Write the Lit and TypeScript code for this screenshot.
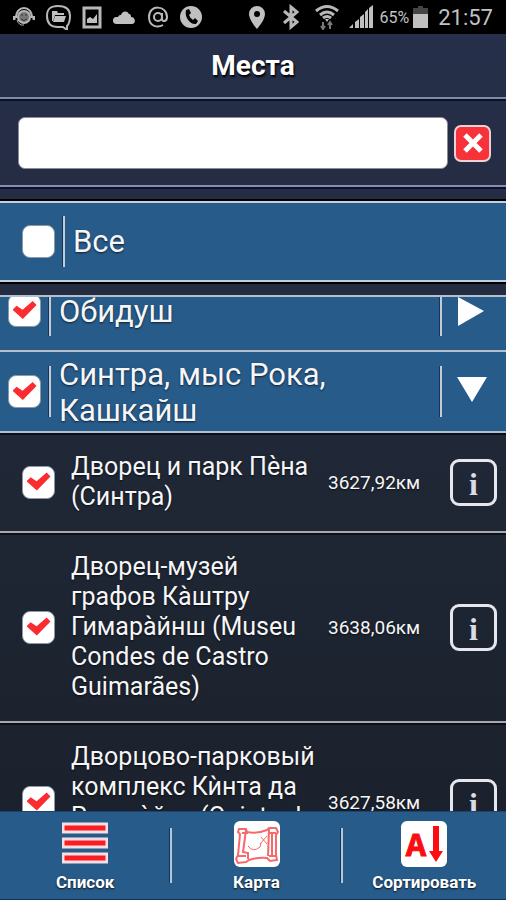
import { LitElement, html, css, svg } from "lit";
import { customElement, property, state } from "lit/decorators.js";

const checkStyles = css`
  input[type="checkbox"] {
    appearance: none;
    flex: none;
    width: 33px;
    height: 33px;
    margin: 0;
    border: 1px solid #8d99a8;
    border-radius: 8px;
    background: #fff;
    display: grid;
    place-items: center;
  }
  input[type="checkbox"]:checked::before {
    content: "";
    width: 24px;
    height: 20px;
    background: #fb2c30;
    clip-path: polygon(0 46%, 17% 26%, 42% 46%, 84% 2%, 100% 22%, 43% 92%);
  }
`;

@customElement("status-bar")
export class StatusBar extends LitElement {
  static styles = css`
    :host {
      display: flex;
      justify-content: space-between;
      align-items: center;
      height: 34px;
      padding: 0 13px;
      background: #000;
      color: #c2c2c2;
    }
    div {
      display: flex;
      align-items: center;
    }
    svg {
      display: block;
      height: 26px;
      fill: none;
      stroke: #b8b8b8;
      stroke-width: 2;
    }
    .solid {
      fill: #c0c0c0;
      stroke: none;
    }
    .left {
      gap: 11px;
    }
    .right {
      gap: 10px;
    }
    .radios {
      gap: 16px;
    }
    .power {
      gap: 4px;
    }
    .signal {
      margin-right: 3px;
    }
    .pct {
      font-size: 16px;
    }
    .clock {
      font-size: 22px;
    }
  `;
  render() {
    return html`
      <div class="left">
        <svg width="22" viewBox="0 0 22 26">
          <path d="M3 14C3 7 7 4 11 4s8 3 8 10" />
          <path d="M1 12v4M21 12v4" stroke-width="3" />
          <circle cx="11" cy="13" r="6" fill="#777" />
          <path d="M8 11h2M12 11h2M8 15q3 3 6 0" stroke="#333" stroke-width="1" />
          <path d="M4 16q2 6 7 5" stroke-width="1" />
        </svg>
        <svg width="25" viewBox="0 0 25 26">
          <path d="M12 2C4 2 1 5 1 12s3 11 11 11h5l4 3v-4c2-2 3-5 3-10C24 5 20 2 12 2Z" />
          <path class="solid" d="M6 7h5l1 2h6v2H9l-2 6H6ZM9 12h11l-2 6H7Z" />
        </svg>
        <svg width="20" viewBox="0 0 20 26">
          <path d="M2 4h16v19H2Z" stroke-width="3" />
          <path class="solid" d="M5 19v-4l3-2 3 2 4-5v9Z" />
        </svg>
        <svg width="23" viewBox="0 0 23 26">
          <path class="solid" d="M3 20a3 3 0 0 1 1-7h1c1-2 2-2 3-2 1-4 6-5 8-1 2 0 2 2 2 3 5 0 5 7 1 7Z" />
        </svg>
        <svg width="22" viewBox="0 0 22 26">
          <circle cx="11" cy="13" r="4" />
          <path d="M15 9v6c0 3 5 3 5-2 0-12-18-13-18 0 0 10 9 11 14 8" />
        </svg>
        <svg width="22" viewBox="0 0 22 26">
          <circle class="solid" cx="11" cy="13" r="11" />
          <path fill="#000" stroke="none" d="M6 6l3-1 2 4-2 2q1 3 4 5l2-2 3 3-2 3C11 21 4 14 6 6Z" />
        </svg>
      </div>
      <div class="right">
        <div class="radios">
          <svg width="20" viewBox="0 0 20 26">
            <path class="solid" fill-rule="evenodd" d="M10 2a8 8 0 0 0-8 8c0 6 8 15 8 15s8-9 8-15a8 8 0 0 0-8-8Zm0 5a3 3 0 1 1 0 6 3 3 0 0 1 0-6Z" />
          </svg>
          <svg width="16" viewBox="0 0 16 26">
            <path d="M1 7l13 11-6 5V3l6 5L1 19" stroke-width="3" />
          </svg>
          <svg width="24" viewBox="0 0 24 26">
            <path d="M1 7q11-9 22 0M5 11q7-6 14 0M8 14q4-3 8 0" stroke-width="3" />
            <path class="solid" d="M10 15h4l-2 3Z" />
            <path d="M8 18v7M6 22l2 3 2-3M15 25v-7M13 21l2-3 2 3" stroke="#777" />
          </svg>
        </div>
        <div class="power">
          <svg class="signal" width="24" viewBox="0 0 24 26">
            <path class="solid" d="M0 24l4-4v4ZM6 18l4-3v9H6ZM11 13l4-3v14h-4Z" />
            <path class="solid" d="M16 8l3-3v19h-3ZM20 4l4-3v23h-4Z" />
          </svg>
          <span class="pct">65%</span>
          <svg width="15" viewBox="0 0 15 26">
            <path fill="#454545" stroke="none" d="M5 2h5v2h5v6H0V4h5Z" />
            <path class="solid" d="M0 10h15v14H0Z" />
          </svg>
        </div>
        <span class="clock">21:57</span>
      </div>
    `;
  }
}

@customElement("group-row")
export class GroupRow extends LitElement {
  @property() name = "";
  @property({ type: Boolean }) open = false;
  static styles = [
    checkStyles,
    css`
      :host {
        display: flex;
        align-items: center;
        min-height: 79px;
        padding: 0 8px;
        background: #275b8a;
        border-bottom: 2px solid #b4bfcc;
      }
      label {
        flex: 1;
        display: flex;
        align-items: center;
        gap: 8px;
      }
      .text {
        flex: 1;
        min-height: 51px;
        padding-top: 2px;
        display: flex;
        align-items: center;
        font-size: 31px;
        line-height: 36px;
      }
      .bar {
        width: 2px;
        height: 51px;
        background: #c3cbd6;
        box-shadow: -1px 0 #16355c;
      }
      button {
        width: 56px;
        height: 51px;
        padding: 0 0 0 4px;
        border: 0;
        background: none;
        display: grid;
        place-items: center;
      }
      svg {
        display: block;
        fill: #fff;
      }
    `,
  ];
  render() {
    return html`
      <label>
        <input type="checkbox" checked />
        <span class="bar"></span>
        <span class="text">${this.name}</span>
      </label>
      <span class="bar"></span>
      <button aria-label=${this.open ? "Свернуть" : "Развернуть"} @click=${() => (this.open = !this.open)}>
        <svg width="30" height="30">
          ${this.open ? svg`<path d="M0 0h30L15 25Z" />` : svg`<path d="M1 1v29l26-15Z" />`}
        </svg>
      </button>
    `;
  }
}

@customElement("place-row")
export class PlaceRow extends LitElement {
  @property() name = "";
  @property() distance = "";
  static styles = [
    checkStyles,
    css`
      :host {
        display: flex;
        align-items: center;
        padding: 19px 9px 19px 22px;
        border-bottom: 2px solid #a9a9ad;
        box-shadow: inset 0 2px #0c101c;
      }
      label {
        flex: 1;
        display: flex;
        align-items: center;
        gap: 16px;
        font-size: 25px;
        line-height: 30px;
      }
      .name {
        flex: 1;
      }
      .distance {
        flex: none;
        width: 122px;
        font-size: 19px;
      }
      button {
        flex: none;
        width: 47px;
        height: 47px;
        padding: 0;
        border: 3px solid #e6e6ee;
        border-radius: 9px;
        background: none;
        color: #d9dce4;
        font: 700 32px/44px "Liberation Serif", serif;
        text-shadow: none;
      }
    `,
  ];
  render() {
    return html`
      <label>
        <input type="checkbox" checked />
        <span class="name">${this.name}</span>
      </label>
      <span class="distance">${this.distance}</span>
      <button>i</button>
    `;
  }
}

@customElement("app-root")
export class AppRoot extends LitElement {
  @state() private query = "";

  private places = [
    { name: "Дворец и парк Пѐна (Синтра)", distance: "3627,92км" },
    { name: "Дворец-музей графов Ка̀штру Гимара̀йнш (Museu Condes de Castro Guimarães)", distance: "3638,06км" },
    { name: "Дворцово-парковый комплекс Кѝнта да Регалѐйра (Quinta da Regaleira)", distance: "3627,58км" },
  ];

  static styles = [
    checkStyles,
    css`
      :host {
        display: flex;
        flex-direction: column;
        height: 100vh;
        overflow: hidden;
        font-family: Roboto, "Noto Sans", sans-serif;
        color: #f6f6f8;
        text-shadow: 0 1px 2px #000a;
        background: linear-gradient(#27304b, #222b3f 35%, #1f2735 55%, #1a202a);
      }
      h1 {
        margin: 0;
        padding: 15px 0;
        border-bottom: 2px solid #7f8d9e;
        box-shadow: 0 2px #0b0f33;
        font-size: 28px;
        line-height: 33px;
        text-align: center;
        color: #fff;
        text-shadow: 1px 2px 2px #000;
      }
      .search {
        display: flex;
        align-items: center;
        gap: 6px;
        padding: 18px 15px 16px 18px;
        border-bottom: 2px solid #8f8bb0;
        box-shadow: 0 2px #0b0f33;
      }
      .search input {
        flex: 1;
        min-width: 0;
        box-sizing: border-box;
        height: 52px;
        padding: 0 12px;
        border: 1px solid #8a8d96;
        border-radius: 7px;
        background: #fff;
        font: 26px Roboto, sans-serif;
      }
      .clear {
        width: 37px;
        height: 37px;
        padding: 0;
        border: 2px solid #f0d0d8;
        border-radius: 7px;
        background: #f73238;
        display: grid;
        place-items: center;
      }
      .all {
        display: flex;
        align-items: center;
        gap: 8px;
        margin: 14px 0 13px;
        padding: 13px 22px;
        border: solid #bfd0e0;
        border-width: 2px 0;
        background: #275b8a;
        box-shadow: 0 2px #000, 0 -2px #000;
        font-size: 31px;
        line-height: 51px;
      }
      .bar {
        width: 2px;
        height: 51px;
        background: #c3cbd6;
        box-shadow: -1px 0 #16355c;
      }
      .list {
        flex: 1;
        min-height: 0;
        overflow-y: auto;
        scrollbar-width: none;
        border-top: 2px solid #b4bfcc;
      }
      nav {
        display: grid;
        grid-template-columns: 34fr 34fr 33fr;
        background: #275b8a;
        border-top: 1px solid #1c4470;
        border-bottom: 1px solid #123258;
      }
      .tab {
        display: flex;
        align-items: center;
        border: 0;
        padding: 0;
        background: none;
        color: #fff;
        font: 700 17px/22px Roboto, sans-serif;
        text-shadow: 0 1px 2px #000c;
      }
      .face {
        flex: 1;
        display: flex;
        flex-direction: column;
        align-items: center;
        gap: 4px;
        padding: 9px 0 6px;
      }
      .tab + .tab::before {
        content: "";
        width: 2px;
        height: 55px;
        background: #b5c6d8;
        box-shadow: -1px 0 #16355c;
      }
      svg {
        display: block;
      }
      .letter {
        font: 700 34px "Liberation Mono", monospace;
        fill: #fb0d12;
        stroke: #fb0d12;
        text-shadow: none;
      }
    `,
  ];

  protected firstUpdated() {
    const list = this.renderRoot.querySelector(".list")!;
    requestAnimationFrame(() => (list.scrollTop = 26));
  }

  render() {
    return html`
      <status-bar></status-bar>
      <h1>Места</h1>
      <div class="search">
        <input
          type="text"
          aria-label="Поиск"
          .value=${this.query}
          @input=${(e: Event) => (this.query = (e.target as HTMLInputElement).value)}
        />
        <button class="clear" aria-label="Очистить" @click=${() => (this.query = "")}>
          <svg width="22" height="22" stroke="#fff" stroke-width="5">
            <path d="M3 3l16 16M19 3L3 19" />
          </svg>
        </button>
      </div>
      <label class="all">
        <input type="checkbox" />
        <span class="bar"></span>
        <span>Все</span>
      </label>
      <div class="list">
        <group-row name="Обидуш"></group-row>
        <group-row name="Синтра, мыс Рока, Кашкайш" open></group-row>
        ${this.places.map((p) => html`<place-row .name=${p.name} .distance=${p.distance}></place-row>`)}
      </div>
      <nav>
        <button class="tab">
          <span class="face">
            <svg width="46" height="46" fill="#fb1d22" stroke="#f3dfe6" stroke-width="3">
              <path d="M1 3h44v8H1ZM1 18h44v8H1ZM1 33h44v8H1Z" />
            </svg>
            Список
          </span>
        </button>
        <button class="tab">
          <span class="face">
            <svg width="46" height="46" fill="none" stroke="#f7686c" stroke-width="2">
              <rect width="46" height="46" rx="6" fill="#fff" stroke="none" />
              <path d="M5 8h7l1 3q10 2 20-2l2-2h7l2 4-2 3v20l1 5-7 1-3-3q-9-1-18 2l-3 2-8 1-2-4 2-4 2-21-2-2Z" />
              <path d="M12 9l-3 22 5 1v6M8 12h6M35 8l-1 27M38 11v25M34 12h8M4 35h8M35 35h7" />
              <path d="M14 25q5 7 12 1l1-4M27 16l6 7M33 15l-7 8" stroke-width="1" />
            </svg>
            Карта
          </span>
        </button>
        <button class="tab">
          <span class="face">
            <svg width="46" height="46">
              <rect width="46" height="46" rx="6" fill="#fff" />
              <text class="letter" x="15" y="35" text-anchor="middle">A</text>
              <path d="M32 5h6v25h4L35 41l-7-11h4Z" fill="#fb0d12" />
            </svg>
            Сортировать
          </span>
        </button>
      </nav>
    `;
  }
}
